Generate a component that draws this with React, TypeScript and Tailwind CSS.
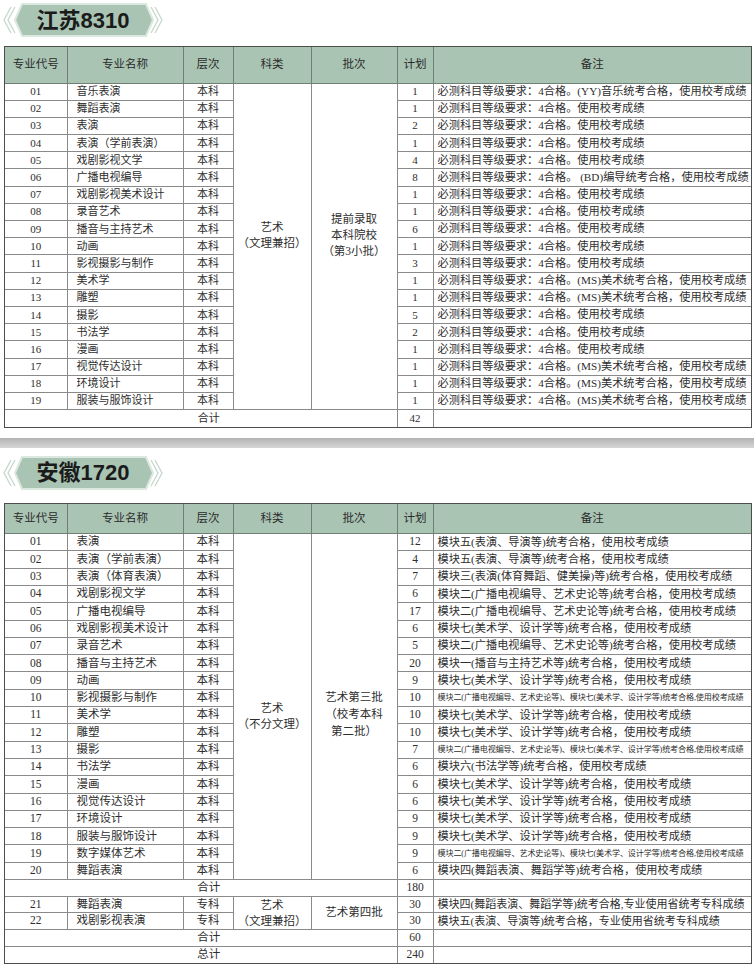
import React from 'react'

type Row = { code: string; name: string; level: string; plan: string; note: string; small?: boolean }

const serif = { fontFamily: '"Liberation Serif", "Noto Sans CJK SC", serif' }
const sans = { fontFamily: '"Liberation Sans", "Noto Sans CJK SC", sans-serif' }

const jsNote = '必测科目等级要求：4合格。使用校考成绩'
const jsMs = '必测科目等级要求：4合格。(MS)美术统考合格，使用校考成绩'

const jiangsu: Row[] = [
    { code: '01', name: '音乐表演', level: '本科', plan: '1', note: '必测科目等级要求：4合格。(YY)音乐统考合格，使用校考成绩' },
    { code: '02', name: '舞蹈表演', level: '本科', plan: '1', note: jsNote },
    { code: '03', name: '表演', level: '本科', plan: '2', note: jsNote },
    { code: '04', name: '表演（学前表演）', level: '本科', plan: '1', note: jsNote },
    { code: '05', name: '戏剧影视文学', level: '本科', plan: '4', note: jsNote },
    { code: '06', name: '广播电视编导', level: '本科', plan: '8', note: '必测科目等级要求：4合格。 (BD)编导统考合格，使用校考成绩' },
    { code: '07', name: '戏剧影视美术设计', level: '本科', plan: '1', note: jsNote },
    { code: '08', name: '录音艺术', level: '本科', plan: '1', note: jsNote },
    { code: '09', name: '播音与主持艺术', level: '本科', plan: '6', note: jsNote },
    { code: '10', name: '动画', level: '本科', plan: '1', note: jsNote },
    { code: '11', name: '影视摄影与制作', level: '本科', plan: '3', note: jsNote },
    { code: '12', name: '美术学', level: '本科', plan: '1', note: jsMs },
    { code: '13', name: '雕塑', level: '本科', plan: '1', note: jsMs },
    { code: '14', name: '摄影', level: '本科', plan: '5', note: jsNote },
    { code: '15', name: '书法学', level: '本科', plan: '2', note: jsNote },
    { code: '16', name: '漫画', level: '本科', plan: '1', note: jsNote },
    { code: '17', name: '视觉传达设计', level: '本科', plan: '1', note: jsMs },
    { code: '18', name: '环境设计', level: '本科', plan: '1', note: jsMs },
    { code: '19', name: '服装与服饰设计', level: '本科', plan: '1', note: jsMs },
]

const m5 = '模块五(表演、导演等)统考合格，使用校考成绩'
const m2 = '模块二(广播电视编导、艺术史论等)统考合格，使用校考成绩'
const m7 = '模块七(美术学、设计学等)统考合格，使用校考成绩'
const m27 = '模块二(广播电视编导、艺术史论等)、模块七(美术学、设计学等)统考合格,使用校考成绩'

const anhui: Row[] = [
    { code: '01', name: '表演', level: '本科', plan: '12', note: m5 },
    { code: '02', name: '表演（学前表演）', level: '本科', plan: '4', note: m5 },
    { code: '03', name: '表演（体育表演）', level: '本科', plan: '7', note: '模块三(表演(体育舞蹈、健美操)等)统考合格，使用校考成绩' },
    { code: '04', name: '戏剧影视文学', level: '本科', plan: '6', note: m2 },
    { code: '05', name: '广播电视编导', level: '本科', plan: '17', note: m2 },
    { code: '06', name: '戏剧影视美术设计', level: '本科', plan: '6', note: m7 },
    { code: '07', name: '录音艺术', level: '本科', plan: '5', note: m2 },
    { code: '08', name: '播音与主持艺术', level: '本科', plan: '20', note: '模块一(播音与主持艺术等)统考合格，使用校考成绩' },
    { code: '09', name: '动画', level: '本科', plan: '9', note: m7 },
    { code: '10', name: '影视摄影与制作', level: '本科', plan: '10', note: m27, small: true },
    { code: '11', name: '美术学', level: '本科', plan: '10', note: m7 },
    { code: '12', name: '雕塑', level: '本科', plan: '10', note: m7 },
    { code: '13', name: '摄影', level: '本科', plan: '7', note: m27, small: true },
    { code: '14', name: '书法学', level: '本科', plan: '6', note: '模块六(书法学等)统考合格，使用校考成绩' },
    { code: '15', name: '漫画', level: '本科', plan: '6', note: m7 },
    { code: '16', name: '视觉传达设计', level: '本科', plan: '6', note: m7 },
    { code: '17', name: '环境设计', level: '本科', plan: '9', note: m7 },
    { code: '18', name: '服装与服饰设计', level: '本科', plan: '9', note: m7 },
    { code: '19', name: '数字媒体艺术', level: '本科', plan: '9', note: m27, small: true },
    { code: '20', name: '舞蹈表演', level: '本科', plan: '6', note: '模块四(舞蹈表演、舞蹈学等)统考合格，使用校考成绩' },
]

const anhuiZk: Row[] = [
    { code: '21', name: '舞蹈表演', level: '专科', plan: '30', note: '模块四(舞蹈表演、舞蹈学等)统考合格,专业使用省统考专科成绩' },
    { code: '22', name: '戏剧影视表演', level: '专科', plan: '30', note: '模块五(表演、导演等)统考合格，专业使用省统考专科成绩' },
]

function Badge({ label }: { label: string }) {
    return (
        <div className="relative w-[164px] h-[36px]">
            <svg className="absolute inset-0" width="164" height="36" viewBox="0 0 164 36">
                <path d="M11 5 L4 18 L11 31" stroke="#c6d7cc" strokeWidth="1.3" fill="none" />
                <path d="M15 5 L8 18 L15 31" stroke="#c6d7cc" strokeWidth="1.3" fill="none" />
                <polygon points="22,2 146,2 153,18 146,34 22,34 15,18" fill="#a9c4b3" stroke="#dbe8df" strokeWidth="2" />
                <path d="M155 5 L162 18 L155 31" stroke="#c6d7cc" strokeWidth="1.3" fill="none" />
                <path d="M151 5 L158 18 L151 31" stroke="#c6d7cc" strokeWidth="1.3" fill="none" />
            </svg>
            <div className="relative h-full flex items-center justify-center pl-[2px] text-[22px] font-bold text-[#1b1b1b]" style={sans}>
                {label}
            </div>
        </div>
    )
}

const td = 'border border-[#8a8a8a] p-0'

function Header({ h }: { h: string }) {
    return (
        <thead>
            <tr className={`bg-[#a9c4b3] ${h}`} style={sans}>
                {['专业代号', '专业名称', '层次', '科类', '批次', '计划', '备注'].map(t => (
                    <th key={t} className="border border-[#6f7f75] p-0 font-normal text-[11.5px] text-[#2b2b2b] text-center">{t}</th>
                ))}
            </tr>
        </thead>
    )
}

function Cols() {
    return (
        <colgroup>
            <col className="w-[62px]" />
            <col className="w-[116px]" />
            <col className="w-[50px]" />
            <col className="w-[78px]" />
            <col className="w-[86px]" />
            <col className="w-[36px]" />
            <col />
        </colgroup>
    )
}

function BodyRow({ r, h, size, children }: { r: Row; h: string; size: string; children?: React.ReactNode }) {
    return (
        <tr className={h}>
            <td className={`${td} leading-none text-center`}>{r.code}</td>
            <td className={`${td} leading-none pl-[9px] whitespace-nowrap`}>{r.name}</td>
            <td className={`${td} leading-none text-center`}>{r.level}</td>
            {children}
            <td className={`${td} leading-none text-center`}>{r.plan}</td>
            <td className={`${td} leading-none pl-[4px] whitespace-nowrap overflow-hidden ${r.small ? 'text-[8.1px] tracking-[-0.15px]' : size}`}>{r.note}</td>
        </tr>
    )
}

function SumRow({ label, value, h }: { label: string; value: string; h: string }) {
    return (
        <tr className={h}>
            <td colSpan={5} className={`${td} leading-none text-center pl-[16px]`} style={sans}>{label}</td>
            <td className={`${td} leading-none text-center`}>{value}</td>
            <td className={td}></td>
        </tr>
    )
}

export default function App() {
    return (
        <div className="w-[754px] min-h-[967px] bg-white text-[#2e2e2e] pt-[2px]">
            <Badge label="江苏8310" />

            <div className="mt-[8px] ml-[4px] w-[748px] border border-[#4d4d4d]">
                <table className="w-full table-fixed border-collapse border-hidden text-[11px]" style={serif}>
                    <Cols />
                    <Header h="h-[36px]" />
                    <tbody>
                        {jiangsu.map((r, i) => (
                            <BodyRow key={r.code} r={r} h="h-[17.2px]" size="text-[11.2px]">
                                {i === 0 && (
                                    <>
                                        <td rowSpan={19} className={`${td} text-center align-middle leading-[16px] pb-[22px] text-[11.5px]`}>
                                            艺术<br />（文理兼招）
                                        </td>
                                        <td rowSpan={19} className={`${td} text-center align-middle leading-[16px] pb-[22px] text-[11.5px]`}>
                                            提前录取<br />本科院校<br />（第3小批）
                                        </td>
                                    </>
                                )}
                            </BodyRow>
                        ))}
                        <SumRow label="合计" value="42" h="h-[17px]" />
                    </tbody>
                </table>
            </div>

            <div className="mt-[10px] h-[10px] bg-linear-to-b from-[#b3b3b3] to-[#d6d6d6]" />

            <div className="mt-[7px]">
                <Badge label="安徽1720" />
            </div>

            <div className="mt-[12px] ml-[4px] w-[748px] border border-[#4d4d4d]">
                <table className="w-full table-fixed border-collapse border-hidden text-[11.5px]" style={serif}>
                    <Cols />
                    <Header h="h-[30px]" />
                    <tbody>
                        {anhui.map((r, i) => (
                            <BodyRow key={r.code} r={r} h="h-[17.3px]" size="text-[11.2px]">
                                {i === 0 && (
                                    <>
                                        <td rowSpan={20} className={`${td} text-center align-middle leading-[16px] pt-[18px]`}>
                                            艺术<br />（不分文理）
                                        </td>
                                        <td rowSpan={20} className={`${td} text-center align-middle leading-[17px] pt-[16px]`}>
                                            艺术第三批<br />（校考本科<br />第二批）
                                        </td>
                                    </>
                                )}
                            </BodyRow>
                        ))}
                        <SumRow label="合计" value="180" h="h-[16.7px]" />
                        {anhuiZk.map((r, i) => (
                            <BodyRow key={r.code} r={r} h="h-[16.7px]" size="text-[11px]">
                                {i === 0 && (
                                    <>
                                        <td rowSpan={2} className={`${td} text-center align-middle leading-[16px]`}>
                                            艺术<br />（文理兼招）
                                        </td>
                                        <td rowSpan={2} className={`${td} text-center align-middle`}>
                                            艺术第四批
                                        </td>
                                    </>
                                )}
                            </BodyRow>
                        ))}
                        <SumRow label="合计" value="60" h="h-[16.7px]" />
                        <SumRow label="总计" value="240" h="h-[16.7px]" />
                    </tbody>
                </table>
            </div>
        </div>
    )
}
